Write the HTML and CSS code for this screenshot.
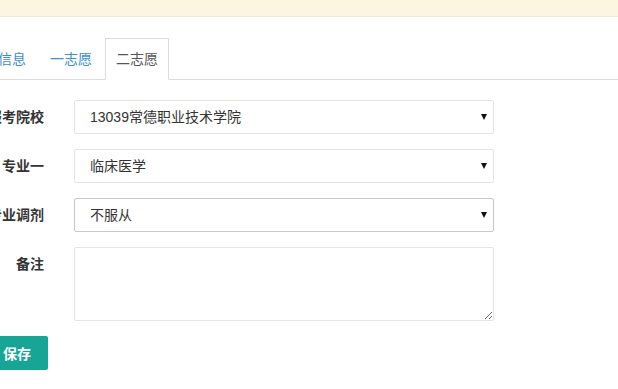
FILE: index.html
```html
<!DOCTYPE html>
<html lang="zh-CN">
<head>
    <meta charset="UTF-8">
    <meta name="viewport" content="width=device-width, initial-scale=1.0">
    <title>志愿填报</title>
    <link rel="stylesheet" href="styles.css">
</head>
<body>
    <div class="notice"></div>

    <div class="page">
        <ul class="tabs">
            <li class="tab"><a href="#">基本信息</a></li>
            <li class="tab"><a href="#">一志愿</a></li>
            <li class="tab active"><a href="#">二志愿</a></li>
        </ul>

        <form class="form">
            <div class="row">
                <label class="label">报考院校</label>
                <div class="field select-wrap">
                    <select class="control">
                        <option>13039常德职业技术学院</option>
                    </select>
                </div>
            </div>
            <div class="row">
                <label class="label">专业一</label>
                <div class="field select-wrap">
                    <select class="control">
                        <option>临床医学</option>
                    </select>
                </div>
            </div>
            <div class="row">
                <label class="label">专业调剂</label>
                <div class="field select-wrap">
                    <select class="control dark">
                        <option>不服从</option>
                        <option>服从</option>
                    </select>
                </div>
            </div>
            <div class="row">
                <label class="label">备注</label>
                <div class="field">
                    <textarea class="control memo"></textarea>
                </div>
            </div>
            <div class="actions">
                <button type="button" class="btn-save">保存</button>
            </div>
        </form>
    </div>
</body>
</html>
```

FILE: styles.css
```css
body {
    margin: 0;
    padding: 0;
    font-family: "Liberation Sans", "Noto Sans CJK SC", sans-serif;
    font-size: 14px;
    color: #333;
    background-color: #fff;
    overflow: hidden;
}

.notice {
    height: 16px;
    background-color: #fcf6e1;
    border-bottom: 1px solid #f5ecd0;
}

.page {
    margin-left: -41px;
    padding-top: 21px;
}

.tabs {
    list-style: none;
    margin: 0;
    padding: 0;
    display: flex;
    border-bottom: 1px solid #ddd;
}

.tab {
    margin-right: 2px;
    margin-bottom: -1px;
}

.tab a {
    display: block;
    padding: 10px 10px;
    line-height: 20px;
    color: #3a8fd0;
    text-decoration: none;
    border: 1px solid transparent;
}

.tab.active a {
    color: #555;
    background-color: #fff;
    border-color: #ddd;
    border-bottom-color: #fff;
}

.form {
    padding-top: 20px;
}

.row {
    display: flex;
    margin-bottom: 15px;
}

.label {
    width: 100px;
    box-sizing: border-box;
    padding-right: 15px;
    padding-top: 8px;
    text-align: right;
    font-weight: bold;
    line-height: 18px;
}

.field {
    margin-left: 15px;
    width: 420px;
}

.select-wrap {
    position: relative;
}

.select-wrap::after {
    content: "";
    position: absolute;
    right: 7px;
    top: 14px;
    border-left: 3px solid transparent;
    border-right: 3px solid transparent;
    border-top: 6px solid #111;
    pointer-events: none;
}

.control {
    display: block;
    width: 100%;
    box-sizing: border-box;
    height: 34px;
    padding: 6px 15px;
    font-family: "Liberation Sans", "Noto Sans CJK SC", sans-serif;
    font-size: 14px;
    color: #333;
    background-color: #fff;
    border: 1px solid #e5e5e5;
    border-radius: 2px;
    outline: none;
    -webkit-appearance: none;
    appearance: none;
}

.control.dark {
    border-color: #c8c8c8;
}

.memo {
    height: 74px;
    resize: vertical;
}

.btn-save {
    display: block;
    margin-left: 27px;
    height: 34px;
    padding: 6px 17px;
    font-family: "Liberation Sans", "Noto Sans CJK SC", sans-serif;
    font-size: 14px;
    font-weight: bold;
    color: #fff;
    background-color: #17a595;
    border: none;
    border-radius: 2px;
}
```
